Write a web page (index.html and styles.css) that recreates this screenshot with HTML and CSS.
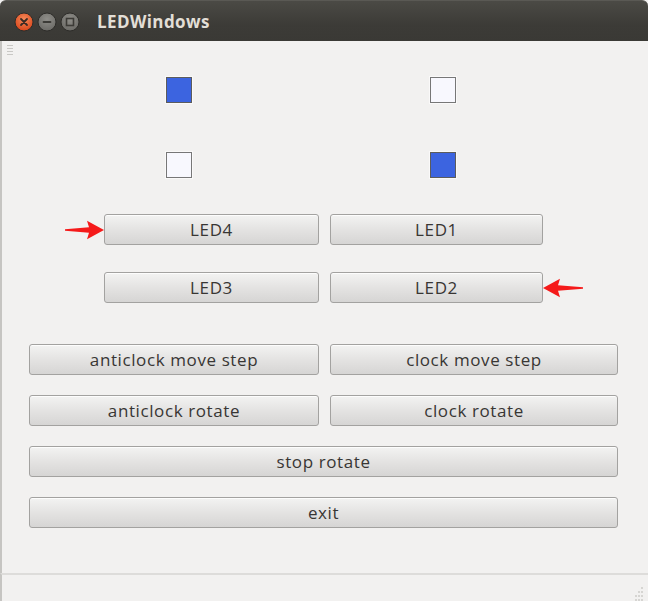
FILE: index.html
```html
<!DOCTYPE html>
<html>
<head>
<meta charset="utf-8">
<title>LEDWindows</title>
<link rel="stylesheet" href="styles.css">
</head>
<body>
<div class="window">
  <header class="titlebar">
    <div class="wm-buttons">
      <svg class="wm-btn" width="20" height="20" viewBox="0 0 20 20">
        <defs>
          <radialGradient id="gClose" cx="50%" cy="35%" r="65%">
            <stop offset="0" stop-color="#f58a5a"/>
            <stop offset="1" stop-color="#d9451a"/>
          </radialGradient>
        </defs>
        <circle cx="10" cy="10" r="9" fill="url(#gClose)" stroke="#2e2d2a" stroke-width="1"/>
        <path d="M7 7 L13 13 M13 7 L7 13" stroke="#3a2a24" stroke-width="1.8" stroke-linecap="round"/>
      </svg>
      <svg class="wm-btn" width="20" height="20" viewBox="0 0 20 20">
        <defs>
          <radialGradient id="gGray" cx="50%" cy="35%" r="65%">
            <stop offset="0" stop-color="#8f8e89"/>
            <stop offset="1" stop-color="#6b6a66"/>
          </radialGradient>
        </defs>
        <circle cx="10" cy="10" r="9" fill="url(#gGray)" stroke="#2e2d2a" stroke-width="1"/>
        <path d="M6.5 10 H13.5" stroke="#3c3b37" stroke-width="1.8" stroke-linecap="round"/>
      </svg>
      <svg class="wm-btn" width="20" height="20" viewBox="0 0 20 20">
        <circle cx="10" cy="10" r="9" fill="url(#gGray)" stroke="#2e2d2a" stroke-width="1"/>
        <rect x="6.5" y="6.5" width="7" height="7" fill="none" stroke="#3c3b37" stroke-width="1.6"/>
      </svg>
    </div>
    <div class="title">LEDWindows</div>
  </header>

  <main class="content">
    <div class="toolbar">
      <svg class="grip" width="6" height="11" viewBox="0 0 6 11">
        <path d="M0 1.5 H6 M0 4.5 H6 M0 7.5 H6 M0 10.5 H6" stroke="#c9c8c5" stroke-width="1"/>
      </svg>
    </div>

    <div class="leds leds-first">
      <span class="led on"></span>
      <span class="led off"></span>
    </div>
    <div class="leds leds-second">
      <span class="led off"></span>
      <span class="led on"></span>
    </div>

    <div class="led-row led-row-first">
      <svg class="arrow arrow-right" width="39" height="20" viewBox="0 0 39 20">
        <path d="M0 9.2 L24 7.2 L22 0.8 L39 10 L22 19.2 L24 12.8 L0 10.8 Z" fill="#f51a1a"/>
      </svg>
      <button class="btn btn-led-left">LED4</button>
      <button class="btn btn-led-right">LED1</button>
      <span></span>
    </div>
    <div class="led-row led-row-second">
      <span></span>
      <button class="btn btn-led-left">LED3</button>
      <button class="btn btn-led-right">LED2</button>
      <svg class="arrow arrow-left" width="40" height="20" viewBox="0 0 40 20">
        <path d="M40 9.2 L15 7.2 L17 0.8 L0 10 L17 19.2 L15 12.8 L40 10.8 Z" fill="#f51a1a"/>
      </svg>
    </div>

    <div class="controls">
      <div class="pair">
        <button class="btn">anticlock move step</button>
        <button class="btn">clock move step</button>
      </div>
      <div class="pair">
        <button class="btn">anticlock rotate</button>
        <button class="btn">clock rotate</button>
      </div>
      <button class="btn wide">stop rotate</button>
      <button class="btn wide">exit</button>
    </div>
  </main>

  <footer class="statusbar">
    <svg class="sizegrip" width="10" height="16" viewBox="0 0 10 16">
      <g fill="#d6d5d2">
        <rect x="6" y="2" width="2" height="2"/>
        <rect x="3" y="6" width="2" height="2"/>
        <rect x="6" y="6" width="2" height="2"/>
        <rect x="3" y="10" width="2" height="2"/>
        <rect x="6" y="10" width="2" height="2"/>
        <rect x="0" y="10" width="2" height="2"/>
        <rect x="3" y="14" width="2" height="2"/>
        <rect x="6" y="14" width="2" height="2"/>
        <rect x="0" y="14" width="2" height="2"/>
      </g>
    </svg>
  </footer>
</div>
</body>
</html>
```

FILE: styles.css
```css
* {
  box-sizing: border-box;
}

html, body {
  margin: 0;
  padding: 0;
  background: #ffffff;
}

body {
  font-family: "Open Sans", "DejaVu Sans", sans-serif;
}

.window {
  width: 648px;
  height: 601px;
  display: flex;
  flex-direction: column;
  background: #f2f1f0;
  overflow: hidden;
}

.titlebar {
  height: 41px;
  flex: none;
  display: flex;
  align-items: center;
  background: linear-gradient(#4b4a45, #3c3b37 60%, #3a3935);
  border-radius: 6px 6px 0 0;
  border-top: 1px solid #5a5954;
  padding-left: 14px;
}

.wm-buttons {
  display: flex;
  gap: 3px;
  margin-top: 1px;
}

.wm-btn {
  display: block;
}

.title {
  margin-left: 17px;
  color: #e2ded6;
  font-weight: 700;
  font-size: 17px;
  letter-spacing: 0.4px;
}

.content {
  flex: 1;
  display: flex;
  flex-direction: column;
  border-left: 2px solid #c6c5c2;
}

.toolbar {
  height: 36px;
  padding: 3px 0 0 5px;
}

.grip {
  display: block;
}

.leds {
  display: flex;
  padding-left: 164px;
  gap: 238px;
}

.leds-second {
  margin-top: 49px;
}

.led {
  width: 26px;
  height: 26px;
  border: 1px solid #5c5c5c;
  box-shadow: 0 0 0 1px rgba(255,255,255,0.6);
}

.led.on {
  background: #3c64e0;
}

.led.off {
  background: #f8f8fe;
  border-color: #777777;
}

.led-row {
  display: grid;
  grid-template-columns: 41px 215px 224px 42px;
  align-items: center;
  padding-left: 61px;
}

.led-row .btn-led-left {
  width: 215px;
}

.led-row .btn-led-right {
  width: 213px;
  justify-self: end;
}

.led-row-first {
  margin-top: 36px;
}

.led-row-second {
  margin-top: 27px;
}

.arrow {
  display: block;
}

.arrow-right {
  justify-self: end;
}

.arrow-left {
  justify-self: start;
}

.controls {
  display: flex;
  flex-direction: column;
  gap: 20px;
  margin-top: 41px;
  padding-left: 27px;
  width: 618px;
}

.pair {
  display: grid;
  grid-template-columns: 290px 288px;
  column-gap: 11px;
}

.btn {
  height: 31px;
  border: 1px solid #a3a2a0;
  border-radius: 3px;
  background: linear-gradient(#f3f3f2, #e4e3e2 50%, #d6d5d4);
  box-shadow: inset 0 1px 0 rgba(255,255,255,0.8);
  color: #383634;
  font-family: "Open Sans", "DejaVu Sans", sans-serif;
  font-size: 17px;
  letter-spacing: 0.6px;
  padding: 0;
  line-height: 28px;
  text-align: center;
}

.wide {
  width: 589px;
}

.statusbar {
  height: 28px;
  flex: none;
  border-top: 2px solid #dddcda;
  border-left: 2px solid #c6c5c2;
  display: flex;
  justify-content: flex-end;
  align-items: flex-end;
  padding: 0 3px 0 0;
}

.sizegrip {
  display: block;
}
```
